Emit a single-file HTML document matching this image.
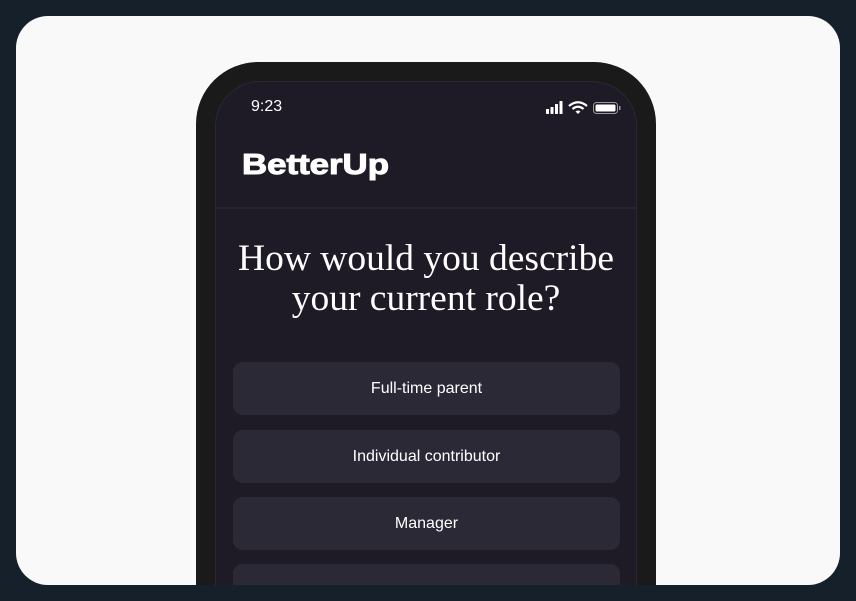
<!DOCTYPE html>
<html><head><meta charset="utf-8"><style>
html,body{margin:0;padding:0;width:856px;height:601px;overflow:hidden;background:#16202a;}
.card{position:absolute;left:16px;top:16px;width:824px;height:569px;background:#f9f9f9;border-radius:32px;overflow:hidden;}
.phone{position:absolute;left:180px;top:46px;width:460px;height:523px;background:#1a1a1b;border-radius:62px 62px 0 0;overflow:hidden;}
.screen{position:absolute;left:20px;top:20px;width:420px;height:520px;background:#1e1b26;border-radius:44px 44px 0 0;box-shadow:0 0 0 1px #2a2830;}
.time{position:absolute;left:35px;top:16px;color:#fff;font:16px "Liberation Sans",sans-serif;}
.logo{position:absolute;left:26px;top:67px;color:#fff;font:900 29px "Liberation Sans",sans-serif;letter-spacing:0;-webkit-text-stroke:1px #fff;transform:scaleX(1.2);transform-origin:0 0;}
.div{position:absolute;left:0;top:125px;width:420px;height:2px;background:#27242f;}
h1{position:absolute;left:0;top:157px;width:420px;margin:0;text-align:center;color:#fff;font:400 37.5px/40px "Liberation Serif",serif;}
.btn{position:absolute;left:17px;width:387px;height:53px;background:#2c2936;border-radius:10px;color:#fff;text-align:center;font:16px/53px "Liberation Sans",sans-serif;}
</style></head><body>
<div class="card">
<div class="phone"><div class="screen">
<div class="time">9:23</div>
<svg style="position:absolute;left:328px;top:18px" width="80" height="16" viewBox="0 0 80 16">
<rect x="2" y="9" width="3" height="5" fill="#fff" rx=".5"/><rect x="6.5" y="7" width="3" height="7" fill="#fff" rx=".5"/><rect x="11" y="4" width="3" height="10" fill="#fff" rx=".5"/><rect x="15.5" y="1" width="3" height="13" fill="#fff" rx=".5"/>
<path d="M25 6 Q34 -1.5 43 6" stroke="#fff" stroke-width="2.2" fill="none"/><path d="M28.5 9 Q34 4.5 39.5 9" stroke="#fff" stroke-width="2.2" fill="none"/><path d="M31.5 11.5 L34 14 L36.5 11.5 Q34 9.5 31.5 11.5Z" fill="#fff"/>
<rect x="49.5" y="2.5" width="24" height="11" rx="3" stroke="#999" fill="none"/><rect x="51.5" y="4.5" width="20" height="7" rx="1.5" fill="#fff"/><rect x="75" y="6" width="1.5" height="4" fill="#999"/>
</svg>
<div class="logo">BetterUp</div>
<div class="div"></div>
<h1>How would you describe<br>your current role?</h1>
<div class="btn" style="top:280px">Full-time parent</div>
<div class="btn" style="top:348px">Individual contributor</div>
<div class="btn" style="top:415px">Manager</div>
<div class="btn" style="top:482px"></div>
</div></div>
</div>
</body></html>
